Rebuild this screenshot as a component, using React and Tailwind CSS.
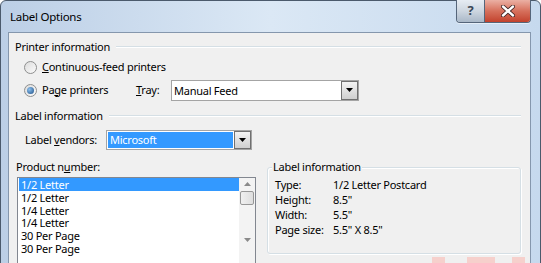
import React from 'react'

const Radio = ({ checked }) => (
  <span className="flex h-[13px] w-[13px] shrink-0 items-center justify-center rounded-full border border-[#8e8f8f] bg-gradient-to-br from-[#dcdcdc] to-[#fbfbfb]">
    {checked && (
      <span className="h-[7px] w-[7px] rounded-full bg-[radial-gradient(circle_at_35%_35%,#8cc0ee,#1d4f86)]" />
    )}
  </span>
)

const DropButton = () => (
  <div className="flex h-full w-[17px] items-center justify-center border border-[#707070] bg-gradient-to-b from-[#f3f3f3] to-[#cfcfcf]">
    <svg width="7" height="4" viewBox="0 0 7 4">
      <path d="M0 0h7L3.5 4z" fill="#000" />
    </svg>
  </div>
)

const GroupHeader = ({ children }) => (
  <div className="flex h-[16px] items-center">
    <span>{children}</span>
    <div className="ml-[6px] h-[2px] flex-1 border-t border-[#d5dfe5] bg-white" />
  </div>
)

const products = ['1/2 Letter', '1/2 Letter', '1/4 Letter', '1/4 Letter', '30 Per Page', '30 Per Page']

const info = [
  ['Type:', '1/2 Letter Postcard'],
  ['Height:', '8.5"'],
  ['Width:', '5.5"'],
  ['Page size:', '5.5" X 8.5"'],
]

export default function App() {
  return (
    <div className='relative h-[263px] w-[541px] overflow-hidden bg-white font-["Noto_Sans",sans-serif] text-[11px] tracking-[-0.25px] text-black'>
      <div className="h-[290px] rounded-t-[6px] border border-[#4b5a6c] bg-gradient-to-r from-[#bccfe6] via-[#dbe8f5] to-[#c6d9ee] pl-[7px] pr-[9px]">
        {/* title bar */}
        <div className="flex h-[31px] items-start justify-between">
          <div className="mt-[7px] pl-[2px] text-[11.5px] leading-[18px]">Label Options</div>
          <div className="-mt-px flex h-[23px] overflow-hidden rounded-b-[4px] border border-t-0 border-[#55657a] shadow-[0_1px_0_#ffffff80]">
            <div className="flex w-[27px] items-center justify-center bg-gradient-to-b from-[#e6ecf3] via-[#cdd6e0] to-[#aab8c8] text-[13px] font-bold text-[#3a4656]">?</div>
            <div className="flex w-[46px] items-center justify-center border-l border-[#55657a] bg-gradient-to-b from-[#eab0a4] via-[#d6705c] to-[#c2412c]">
              <svg width="14" height="12" viewBox="0 0 14 12">
                <path d="M2 1.5l10 9M12 1.5l-10 9" stroke="#3a2020" strokeWidth="4" strokeLinecap="round" />
                <path d="M2 1.5l10 9M12 1.5l-10 9" stroke="#fff" strokeWidth="2.4" strokeLinecap="round" />
              </svg>
            </div>
          </div>
        </div>

        {/* client area */}
        <div className="h-[260px] border border-[#8597ad] bg-[#f0f0f0] pl-[6px] pr-[9px]">
          <div className="pt-[6px]">
            <GroupHeader>Printer information</GroupHeader>
          </div>

          <div className="mt-[4px] flex h-[16px] items-center pl-[9px]">
            <Radio />
            <span className="ml-[5px]"><u>C</u>ontinuous-feed printers</span>
          </div>

          <div className="mt-[4px] flex h-[22px] items-center pl-[9px]">
            <Radio checked />
            <span className="ml-[5px] w-[94px]">Pa<u>g</u>e printers</span>
            <span className="w-[35px]"><u>T</u>ray:</span>
            <div className="flex h-[21px] w-[188px] items-stretch border border-[#a4a4a4] bg-white">
              <span className="flex-1 pl-[2px] leading-[19px]">Manual Feed</span>
              <DropButton />
            </div>
          </div>

          <div className="mt-[7px]">
            <GroupHeader>Label information</GroupHeader>
          </div>

          <div className="mt-[6px] flex h-[20px] items-center pl-[10px]">
            <span className="w-[81px]">Label <u>v</u>endors:</span>
            <div className="flex h-[20px] w-[146px] items-stretch border border-[#a4a4a4] bg-white">
              <div className="m-[1px] flex-1 bg-[#3399ff] pl-[2px] leading-[16px] text-white">Microsoft</div>
              <DropButton />
            </div>
          </div>

          <div className="mt-[8px] grid grid-cols-[251px_1fr] gap-[1px]">
            <div>
              <div className="h-[17px] pl-[1px] leading-[17px]">Product n<u>u</u>mber:</div>
              <div className="mt-[2px] ml-[2px] flex h-[95px] w-[239px] border border-[#828790] bg-white">
                <div className="flex-1 pl-px">
                  {products.map((p, i) => (
                    <div
                      key={i}
                      className={`h-[12.8px] pl-[2px] leading-[13px] ${i === 0 ? 'bg-[#3399ff] text-white' : ''}`}
                    >
                      {p}
                    </div>
                  ))}
                </div>
                <div className="flex w-[16px] flex-col items-center bg-[#f3f3f3]">
                  <svg className="mt-[4px]" width="7" height="4" viewBox="0 0 7 4">
                    <path d="M0 4h7L3.5 0z" fill="#8a8a8a" />
                  </svg>
                  <div className="mt-[5px] h-[14px] w-[14px] rounded-[2px] border border-[#979797] bg-gradient-to-r from-[#f0f0f0] to-[#dedede]" />
                  <svg className="mt-[33px]" width="7" height="4" viewBox="0 0 7 4">
                    <path d="M0 0h7L3.5 4z" fill="#8a8a8a" />
                  </svg>
                </div>
              </div>
            </div>

            <div className="relative mt-[9px] h-[87px] w-[254px] rounded-[3px] border border-[#d5dfe5] shadow-[inset_1px_1px_0_#ffffff,1px_1px_0_#ffffff]">
              <span className="absolute -top-[9px] left-[4px] bg-[#f0f0f0] px-[1px] leading-[16px]">Label information</span>
              <div className="mt-[10px] pl-[7px]">
                {info.map(([k, v]) => (
                  <div key={k} className="flex h-[15px] items-center">
                    <span className="w-[58px]">{k}</span>
                    <span>{v}</span>
                  </div>
                ))}
              </div>
            </div>
          </div>
        </div>
      </div>

      {/* watermark fragments */}
      <div className="absolute left-[432px] top-[257px] h-[6px] w-[13px] bg-[#f6d0cc]" />
      <div className="absolute left-[467px] top-[257px] h-[6px] w-[28px] bg-[#f6d0cc]" />
      <div className="absolute left-[512px] top-[257px] h-[6px] w-[13px] bg-[#f6d0cc]" />
    </div>
  )
}
